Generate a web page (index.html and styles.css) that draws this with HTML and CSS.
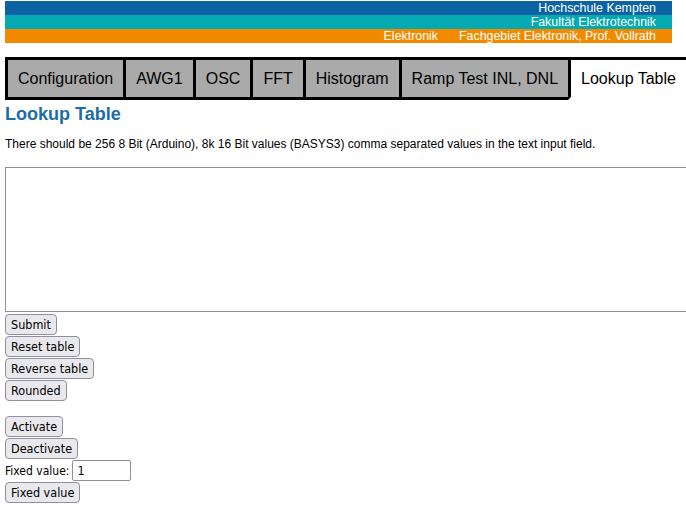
FILE: index.html
```html
<!DOCTYPE html>
<html lang="de">
<head>
<meta charset="utf-8">
<title>Lookup Table</title>
<link rel="stylesheet" href="styles.css">
</head>
<body>
<div class="page">
  <header class="brand">
    <div class="bar bar-blue">Hochschule Kempten</div>
    <div class="bar bar-teal">Fakultät Elektrotechnik</div>
    <div class="bar bar-orange"><span class="dept">Elektronik</span><span>Fachgebiet Elektronik, Prof. Vollrath</span></div>
  </header>

  <nav class="tabs">
    <div class="tab">Configuration</div>
    <div class="tab">AWG1</div>
    <div class="tab">OSC</div>
    <div class="tab">FFT</div>
    <div class="tab">Histogram</div>
    <div class="tab">Ramp Test INL, DNL</div>
    <div class="tab active">Lookup Table</div>
  </nav>

  <h2 class="title">Lookup Table</h2>
  <p class="info">There should be 256 8 Bit (Arduino), 8k 16 Bit values (BASYS3) comma separated values in the text input field.</p>

  <textarea class="values"></textarea>

  <div class="controls">
    <button class="btn">Submit</button>
    <button class="btn">Reset table</button>
    <button class="btn">Reverse table</button>
    <button class="btn">Rounded</button>
    <button class="btn spaced">Activate</button>
    <button class="btn">Deactivate</button>
    <div class="field"><label class="lbl" for="fv">Fixed value:</label><input id="fv" class="num" type="text" value="1"></div>
    <button class="btn">Fixed value</button>
  </div>
</div>
</body>
</html>
```
FILE: styles.css
```css
html, body {
  margin: 0;
  padding: 0;
  overflow: hidden;
  background: #fff;
}
body {
  font-family: "Liberation Sans", Arial, sans-serif;
  color: #000;
}
.page {
  padding: 1px 0 0 5px;
  overflow: hidden;
  width: 681px;
}
.brand {
  width: 667px;
}
.bar {
  height: 14px;
  line-height: 14px;
  font-size: 12.4px;
  color: #fff;
  text-align: right;
  padding-right: 16px;
  white-space: nowrap;
}
.bar-blue { background: #0b63a3; }
.bar-teal { background: #04a9b1; }
.bar-orange { background: #f28a00; }
.dept { margin-right: 21px; }

.tabs {
  display: flex;
  margin-top: 14px;
  white-space: nowrap;
}
.tab {
  flex: none;
  font-size: 16px;
  line-height: 19px;
  padding: 9px 10px;
  border: 3px solid #000;
  background: #aaaaaa;
  margin-left: -3px;
  position: relative;
}
.tab:first-child { margin-left: 0; }
.tab.active {
  background: #fff;
  border-bottom-color: #fff;
}

.title {
  margin: 4px 0 0 0;
  font-size: 18px;
  line-height: 21px;
  font-weight: bold;
  color: #1b6ca8;
}
.info {
  margin: 12px 0 0 0;
  font-size: 12px;
  line-height: 14px;
}
.values {
  display: block;
  margin: 16px 0 0 0;
  width: 720px;
  height: 145px;
  box-sizing: border-box;
  border: 1px solid #8f8f8f;
  padding: 2px;
  resize: none;
  background: #fff;
}
.controls {
  display: flex;
  flex-direction: column;
  align-items: flex-start;
  gap: 1px;
  margin-top: 2px;
}
.btn {
  height: 21px;
  box-sizing: border-box;
  padding: 0 5px;
  border: 1px solid #8f8f9d;
  border-radius: 4px;
  background: #e9e9ed;
  color: #000;
  font-family: "DejaVu Sans Condensed", "DejaVu Sans", sans-serif;
  font-stretch: condensed;
  font-size: 12.5px;
  line-height: 19px;
}
.spaced { margin-top: 14px; }
.field {
  display: flex;
  align-items: center;
  gap: 3px;
}
.lbl {
  font-family: "DejaVu Sans Condensed", "DejaVu Sans", sans-serif;
  font-stretch: condensed;
  font-size: 12px;
}
.num {
  width: 59px;
  height: 21px;
  box-sizing: border-box;
  border: 1px solid #8f8f9d;
  border-radius: 2px;
  padding: 0 4px;
  font-family: "DejaVu Sans Condensed", "DejaVu Sans", sans-serif;
  font-stretch: condensed;
  font-size: 12.5px;
  margin: 0;
}
```
